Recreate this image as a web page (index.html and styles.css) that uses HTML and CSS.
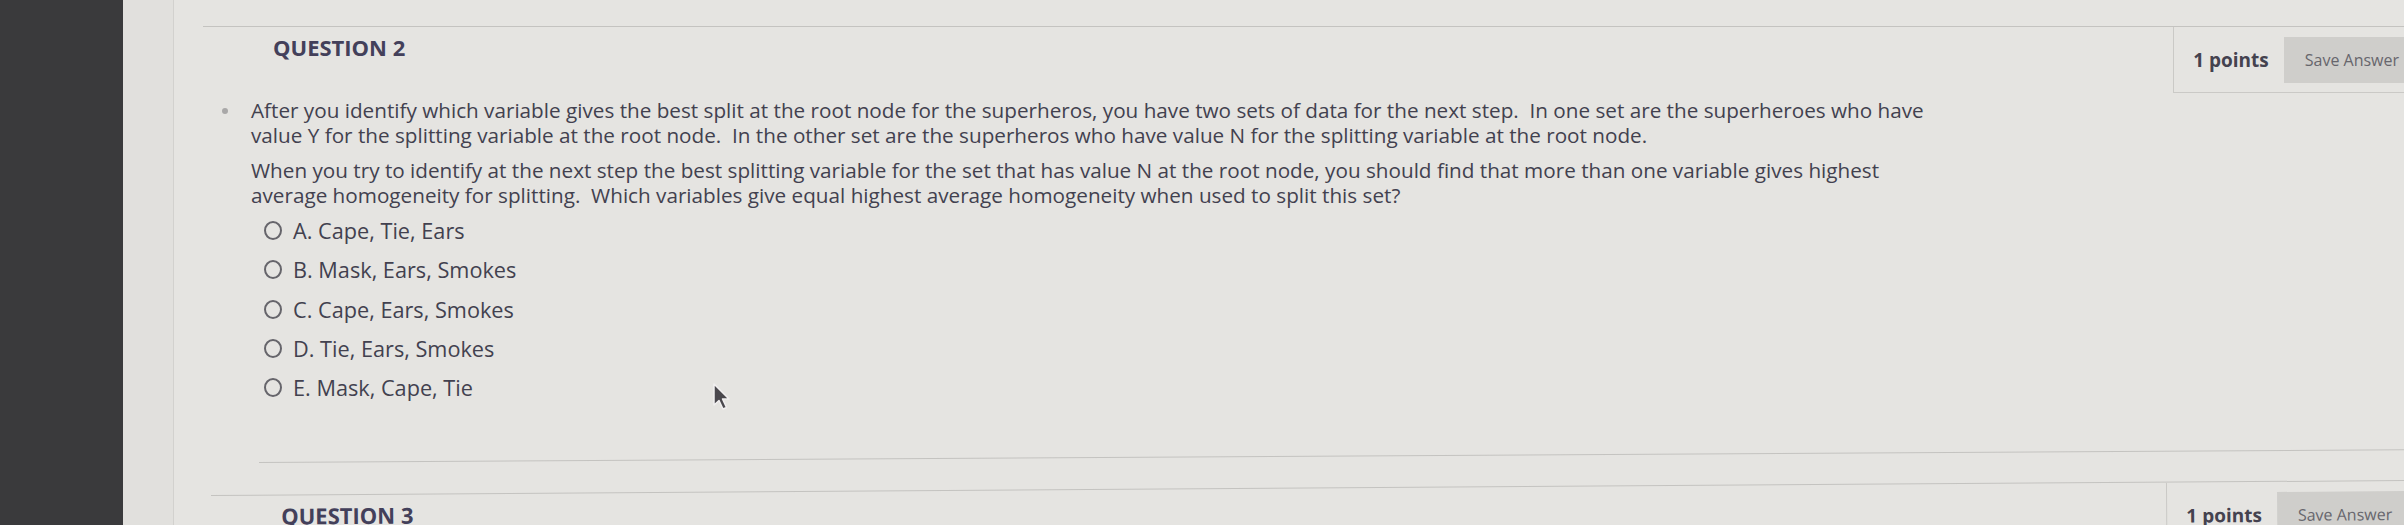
FILE: index.html
```html
<!DOCTYPE html>
<html lang="en">
<head>
<meta charset="utf-8">
<title>Question 2</title>
<link rel="stylesheet" href="styles.css">
</head>
<body>
<div class="rail"></div>
<div class="gutter"></div>
<main class="content">
  <section class="question">
    <div class="q-head">
      <h2 class="q-title">QUESTION 2</h2>
      <div class="points">
        <span class="points-label">1 points</span>
        <button class="save-btn" type="button">Save Answer</button>
      </div>
    </div>
    <div class="q-body">
      <span class="bullet"></span>
      <div class="q-text">
        <p>After you identify which variable gives the best split at the root node for the superheros, you have two sets of data for the next step.&nbsp; In one set are the superheroes who have<br>value Y for the splitting variable at the root node.&nbsp; In the other set are the superheros who have value N for the splitting variable at the root node.</p>
        <p>When you try to identify at the next step the best splitting variable for the set that has value N at the root node, you should find that more than one variable gives highest<br>average homogeneity for splitting.&nbsp; Which variables give equal highest average homogeneity when used to split this set?</p>
        <ul class="options">
          <li class="option"><span class="radio"></span><span class="opt-text">A. Cape, Tie, Ears</span></li>
          <li class="option"><span class="radio"></span><span class="opt-text">B. Mask, Ears, Smokes</span></li>
          <li class="option"><span class="radio"></span><span class="opt-text">C. Cape, Ears, Smokes</span></li>
          <li class="option"><span class="radio"></span><span class="opt-text">D. Tie, Ears, Smokes</span></li>
          <li class="option"><span class="radio"></span><span class="opt-text">E. Mask, Cape, Tie</span></li>
        </ul>
      </div>
    </div>
    <div class="q-foot"></div>
  </section>
  <section class="question q-next">
    <div class="q-head">
      <h2 class="q-title">QUESTION 3</h2>
      <div class="points">
        <span class="points-label">1 points</span>
        <button class="save-btn" type="button">Save Answer</button>
      </div>
    </div>
  </section>
</main>
<svg class="cursor" width="20" height="30" viewBox="0 0 20 30" aria-hidden="true">
  <path d="M2 2 L2 23 L7 18.5 L11 27 L14.5 25.5 L10.5 17 L17 17 Z" fill="#4a484d" stroke="#f1eff0" stroke-width="1.5" stroke-linejoin="round"/>
</svg>
</body>
</html>
```
FILE: styles.css
```css
html, body {
  margin: 0;
  padding: 0;
}
body {
  width: 2404px;
  height: 525px;
  overflow: hidden;
  display: flex;
  background: #e5e4e1;
  font-family: "Open Sans", "Noto Sans", sans-serif;
  color: #42414f;
  position: relative;
}
.rail {
  flex: none;
  width: 123px;
  background: #3a3a3c;
}
.gutter {
  flex: none;
  width: 50px;
  background: #e1e0dd;
  border-right: 1px solid #d2d1ce;
}
.content {
  flex: 1;
  min-width: 0;
}
.question {
  margin: 26px -16px 0 29px;
  border-top: 1px solid #c4c3c0;
}
.q-head {
  display: flex;
  justify-content: space-between;
  align-items: flex-start;
}
.q-title {
  margin: 5px 0 0 70px;
  font-size: 22px;
  line-height: 30px;
  font-weight: 700;
  color: #43405a;
}
.points {
  display: flex;
  align-items: center;
  gap: 15px;
  padding: 10px 0 9px 19px;
  border-left: 1px solid #cac9c6;
  border-bottom: 1px solid #cac9c6;
}
.points-label {
  font-size: 19px;
  font-weight: 700;
  color: #44424f;
}
.save-btn {
  height: 46px;
  padding: 0 21px;
  border: none;
  background: #cfcecb;
  font-family: "Open Sans", "Noto Sans", sans-serif;
  font-size: 16px;
  color: #67666d;
}
.q-body {
  display: flex;
  align-items: flex-start;
  margin-top: 5px;
  padding-left: 19px;
}
.bullet {
  flex: none;
  width: 6px;
  height: 6px;
  border-radius: 50%;
  background: #a9a8a8;
  margin-top: 10px;
  margin-right: 23px;
}
.q-text {
  font-size: 20.7px;
  line-height: 25px;
}
.q-text p {
  margin: 0 0 10px;
  white-space: nowrap;
}
.options {
  list-style: none;
  margin: -7px 0 0 13px;
  padding: 0;
}
.option {
  display: flex;
  align-items: center;
  height: 39.3px;
}
.radio {
  flex: none;
  width: 14px;
  height: 15px;
  border: 2px solid #66656b;
  border-radius: 50%;
  margin-right: 11px;
}
.opt-text {
  font-size: 21.7px;
  color: #42414f;
}
.q-foot {
  margin: 55px 0 0 56px;
  border-top: 1px solid #c4c3c0;
  transform: rotate(-0.34deg);
  transform-origin: left top;
}
.q-next {
  margin: 32px -9px 0 37px;
  transform: rotate(-0.39deg);
  transform-origin: left top;
}
.cursor {
  position: absolute;
  left: 712px;
  top: 382px;
}
```
